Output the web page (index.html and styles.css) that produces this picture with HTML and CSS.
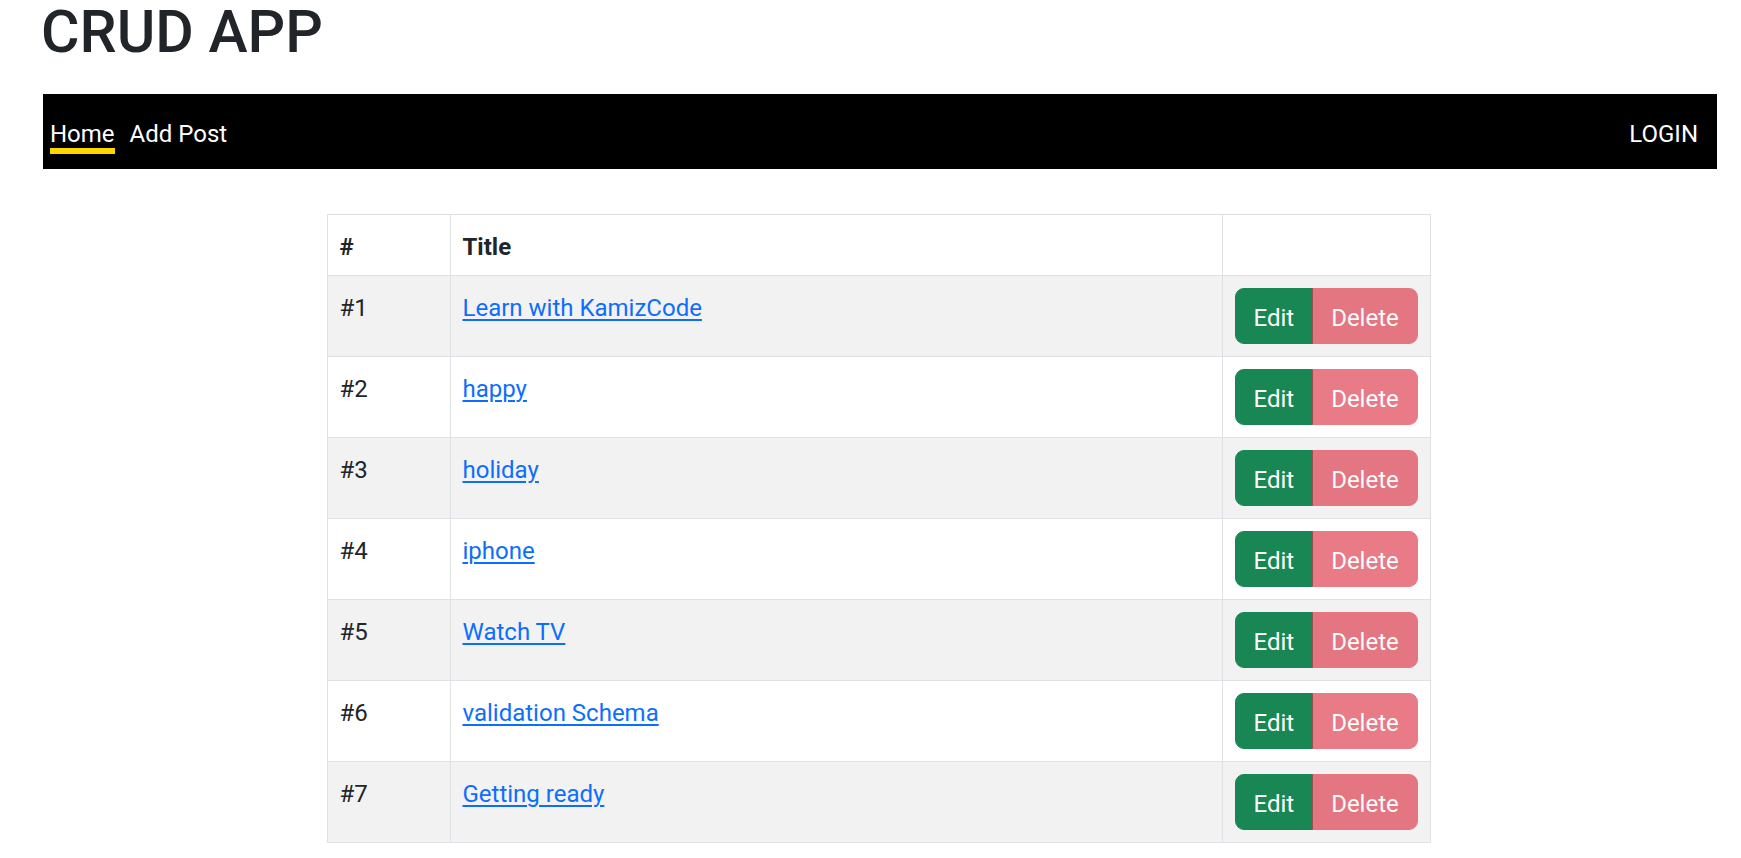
FILE: index.html
```
<!DOCTYPE html>
<html lang="en">
<head>
<meta charset="utf-8">
<title>CRUD APP</title>
<link rel="stylesheet" href="styles.css">
</head>
<body>
<div class="page">
  <h1 class="app-title">CRUD APP</h1>
  <nav class="navbar">
    <div class="nav-links">
      <a class="nav-link active" href="#">Home</a>
      <a class="nav-link" href="#">Add Post</a>
    </div>
    <a class="nav-link" href="#">LOGIN</a>
  </nav>
  <main class="content">
    <table class="posts">
      <colgroup>
        <col class="col-num">
        <col class="col-title">
        <col class="col-actions">
      </colgroup>
      <thead>
        <tr><th>#</th><th>Title</th><th></th></tr>
      </thead>
      <tbody>
        <tr><td class="cell-text">#1</td><td class="cell-text"><a class="post-link" href="#">Learn with KamizCode</a></td><td class="cell-actions"><div class="btn-group"><button class="btn btn-edit">Edit</button><button class="btn btn-delete">Delete</button></div></td></tr>
        <tr><td class="cell-text">#2</td><td class="cell-text"><a class="post-link" href="#">happy</a></td><td class="cell-actions"><div class="btn-group"><button class="btn btn-edit">Edit</button><button class="btn btn-delete">Delete</button></div></td></tr>
        <tr><td class="cell-text">#3</td><td class="cell-text"><a class="post-link" href="#">holiday</a></td><td class="cell-actions"><div class="btn-group"><button class="btn btn-edit">Edit</button><button class="btn btn-delete">Delete</button></div></td></tr>
        <tr><td class="cell-text">#4</td><td class="cell-text"><a class="post-link" href="#">iphone</a></td><td class="cell-actions"><div class="btn-group"><button class="btn btn-edit">Edit</button><button class="btn btn-delete">Delete</button></div></td></tr>
        <tr><td class="cell-text">#5</td><td class="cell-text"><a class="post-link" href="#">Watch TV</a></td><td class="cell-actions"><div class="btn-group"><button class="btn btn-edit">Edit</button><button class="btn btn-delete">Delete</button></div></td></tr>
        <tr><td class="cell-text">#6</td><td class="cell-text"><a class="post-link" href="#">validation Schema</a></td><td class="cell-actions"><div class="btn-group"><button class="btn btn-edit">Edit</button><button class="btn btn-delete">Delete</button></div></td></tr>
        <tr><td class="cell-text">#7</td><td class="cell-text"><a class="post-link" href="#">Getting ready</a></td><td class="cell-actions"><div class="btn-group"><button class="btn btn-edit">Edit</button><button class="btn btn-delete">Delete</button></div></td></tr>
      </tbody>
    </table>
  </main>
</div>
</body>
</html>
```
FILE: styles.css
```
* { box-sizing: border-box; }

body {
  margin: 0;
  font-family: Roboto, "Liberation Sans", sans-serif;
  font-size: 24px;
  color: #212529;
  background: #fff;
}

.page {
  padding: 0 24px 0 43px;
}

.app-title {
  margin: 0 0 30px -2px;
  font-size: 59px;
  font-weight: 500;
  line-height: 64px;
  color: #212529;
}

.navbar {
  height: 75px;
  background: #000;
  display: flex;
  align-items: flex-end;
  justify-content: space-between;
  padding: 0 19px 15px 7px;
}

.nav-links {
  display: flex;
  gap: 15px;
}

.nav-link {
  display: inline-block;
  color: #fff;
  text-decoration: none;
  font-size: 24px;
  line-height: normal;
  border-bottom: 6px solid transparent;
}

.nav-link.active {
  border-bottom-color: #ffd700;
}

.content {
  margin-top: 45px;
  display: flex;
  justify-content: center;
  padding-right: 3px;
}

.posts {
  width: 1103px;
  table-layout: fixed;
  border-collapse: collapse;
  border: 1px solid #dee2e6;
}

.col-num { width: 123px; }
.col-title { width: 772px; }
.col-actions { width: 208px; }

.posts th,
.posts td {
  border: 1px solid #dee2e6;
  padding: 12px;
  vertical-align: top;
  text-align: left;
  font-size: 24px;
  line-height: 36px;
}

.posts th {
  font-weight: 700;
  color: #212529;
  padding-top: 14px;
  padding-bottom: 10px;
}

.posts tbody tr:nth-child(odd) td {
  background: #f2f2f2;
}

.posts td.cell-text {
  padding-top: 14px;
  padding-bottom: 10px;
}

.post-link {
  color: #0d6efd;
  text-decoration: underline;
  text-underline-offset: 3px;
  text-decoration-thickness: 1.5px;
}

.btn-group {
  display: inline-flex;
}

.btn {
  font-family: Roboto, "Liberation Sans", sans-serif;
  font-size: 24px;
  line-height: 36px;
  padding: 11px 18px 7px;
  border: 1px solid;
  color: #fff;
  cursor: pointer;
}

.btn-edit {
  background: #198754;
  border-color: #198754;
  border-radius: 9px 0 0 9px;
}

.btn-delete {
  background: #dc3545;
  border-color: #dc3545;
  border-radius: 0 9px 9px 0;
  opacity: 0.65;
  margin-left: -1px;
}
```
